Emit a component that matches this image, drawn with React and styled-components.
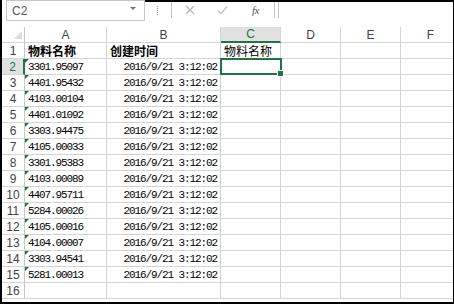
import React from 'react';
import styled, { createGlobalStyle, css } from 'styled-components';

const GlobalStyle = createGlobalStyle`
  html, body {
    margin: 0;
    padding: 0;
    background: #ffffff;
  }
`;

const codes = [
  '3301.95097',
  '4401.95432',
  '4103.00104',
  '4401.01092',
  '3303.94475',
  '4105.00033',
  '3301.95383',
  '4103.00089',
  '4407.95711',
  '5284.00026',
  '4105.00016',
  '4104.00007',
  '3303.94541',
  '5281.00013'
];

const columns = ['A', 'B', 'C', 'D', 'E', 'F'];
const colWidths = '23px 82px 114px 60px 60px 60px 60px';

const Frame = styled.div`
  width: 454px;
  height: 304px;
  box-sizing: border-box;
  border-left: 2px solid #000;
  border-right: 1px solid #000;
  border-bottom: 2px solid #000;
  background: #fff;
  overflow: hidden;
  display: flex;
  flex-direction: column;
`;

const FormulaBar = styled.div`
  display: flex;
  align-items: flex-start;
  height: 27px;
  flex-shrink: 0;
  padding-left: 4px;
`;

const NameBox = styled.div`
  width: 139px;
  height: 21px;
  box-sizing: border-box;
  border: 1px solid #c6c6c6;
  display: flex;
  align-items: center;
  justify-content: space-between;
  padding: 0 8px 0 5px;
  font-family: 'Liberation Sans', Arial, sans-serif;
  font-size: 12px;
  color: #555;
`;

const DropArrow = styled.span`
  width: 0;
  height: 0;
  border-left: 3px solid transparent;
  border-right: 3px solid transparent;
  border-top: 3px solid #777;
  margin-top: -4px;
`;

const ToolStrip = styled.div`
  flex: 1;
  display: flex;
  align-items: flex-start;
  border-top: 2px solid #000;
  height: 16px;
`;

const Dots = styled.div`
  width: 0;
  height: 9px;
  margin: 4px 13px 0 12px;
  border-left: 1px dotted #909090;
`;

const FxBox = styled.div`
  width: 104px;
  height: 16px;
  box-sizing: border-box;
  border-left: 1px solid #c6c6c6;
  border-right: 1px solid #c6c6c6;
  display: flex;
  align-items: center;
  padding-left: 13px;
  gap: 22px;
`;

const FxLabel = styled.span`
  font-family: 'Liberation Serif', 'Times New Roman', serif;
  font-style: italic;
  font-size: 11px;
  color: #555;
  letter-spacing: -0.5px;
  margin-left: 2px;
`;

const FormulaInput = styled.div`
  flex: 1;
  height: 16px;
  margin-left: 3px;
  border-left: 1px solid #c6c6c6;
`;

const Sheet = styled.div`
  display: grid;
  grid-template-columns: ${colWidths};
  grid-auto-rows: 16px;
  overflow: hidden;
  flex: 1;
`;

const baseCell = css`
  box-sizing: border-box;
  border-right: 1px solid #d4d4d4;
  border-bottom: 1px solid #d4d4d4;
  display: flex;
  align-items: center;
  overflow: visible;
  white-space: nowrap;
  position: relative;
`;

const Corner = styled.div`
  ${baseCell};
  border-right-color: #c6c6c6;
  &::after {
    content: '';
    position: absolute;
    right: 2px;
    bottom: 3px;
    width: 0;
    height: 0;
    border-left: 8px solid transparent;
    border-bottom: 8px solid #dcdcdc;
  }
`;

const ColHead = styled.div`
  ${baseCell};
  justify-content: center;
  font-family: 'Liberation Sans', Arial, sans-serif;
  font-size: 12px;
  color: #444;
  ${(p) =>
    p.$active &&
    css`
      background: #e1e1e1;
      color: #217346;
      border-bottom: 2px solid #217346;
    `}
`;

const RowHead = styled.div`
  ${baseCell};
  justify-content: center;
  font-family: 'Liberation Sans', Arial, sans-serif;
  font-size: 12px;
  color: #444;
  border-right-color: #c6c6c6;
  ${(p) =>
    p.$active &&
    css`
      background: #e1e1e1;
      color: #217346;
      border-right: 2px solid #217346;
    `}
`;

const Cell = styled.div`
  ${baseCell};
  justify-content: ${(p) => (p.$right ? 'flex-end' : 'flex-start')};
  padding: 0 3px;
  color: #000;
  font-family: ${(p) =>
    p.$cjk
      ? "'Noto Sans CJK SC', 'Noto Sans', sans-serif"
      : "'Liberation Mono', 'Courier New', monospace"};
  font-size: ${(p) => (p.$cjk ? '12px' : '11px')};
  font-weight: ${(p) => (p.$bold ? 700 : 400)};
  letter-spacing: ${(p) => (p.$cjk ? '0' : '-1.1px')};

  ${(p) =>
    p.$flag &&
    css`
      &::before {
        content: '';
        position: absolute;
        left: 0;
        top: 0;
        width: 0;
        height: 0;
        border-top: 4px solid #1e7145;
        border-right: 4px solid transparent;
      }
    `}

  ${(p) =>
    p.$selected &&
    css`
      &::after {
        content: '';
        position: absolute;
        left: -1px;
        top: -1px;
        right: -2px;
        bottom: -1px;
        border: 2px solid #217346;
        z-index: 2;
      }
    `}
`;

const Handle = styled.span`
  position: absolute;
  right: -4px;
  bottom: -3px;
  width: 5px;
  height: 5px;
  background: #217346;
  border: 1px solid #fff;
  z-index: 3;
`;

const CrossIcon = () => (
  <svg width="10" height="10" viewBox="0 0 10 10">
    <path d="M1 1 L9 9 M9 1 L1 9" stroke="#b4b4b4" strokeWidth="1.2" fill="none" />
  </svg>
);

const CheckIcon = () => (
  <svg width="11" height="10" viewBox="0 0 11 10">
    <path d="M1 5.5 L4 8.5 L10 1.5" stroke="#c0c0c0" strokeWidth="1.2" fill="none" />
  </svg>
);

const Row = ({ n, children }) => (
  <>
    <RowHead $active={n === 2}>{n}</RowHead>
    {children}
  </>
);

const App = () => {
  return (
    <>
      <GlobalStyle />
      <Frame>
        <FormulaBar>
          <NameBox>
            C2
            <DropArrow />
          </NameBox>
          <ToolStrip>
            <Dots />
            <FxBox>
              <CrossIcon />
              <CheckIcon />
              <FxLabel>fx</FxLabel>
            </FxBox>
            <FormulaInput />
          </ToolStrip>
        </FormulaBar>

        <Sheet>
          <Corner />
          {columns.map((c) => (
            <ColHead key={c} $active={c === 'C'}>
              {c}
            </ColHead>
          ))}

          <Row n={1}>
            <Cell $cjk $bold>物料名称</Cell>
            <Cell $cjk $bold>创建时间</Cell>
            <Cell $cjk>物料名称</Cell>
            <Cell />
            <Cell />
            <Cell />
          </Row>

          {codes.map((code, i) => (
            <Row key={code} n={i + 2}>
              <Cell $flag>{code}</Cell>
              <Cell $right>2016/9/21 3:12:02</Cell>
              <Cell $selected={i === 0}>{i === 0 && <Handle />}</Cell>
              <Cell />
              <Cell />
              <Cell />
            </Row>
          ))}

          <Row n={16}>
            <Cell />
            <Cell />
            <Cell />
            <Cell />
            <Cell />
            <Cell />
          </Row>
        </Sheet>
      </Frame>
    </>
  );
};

export default App;
